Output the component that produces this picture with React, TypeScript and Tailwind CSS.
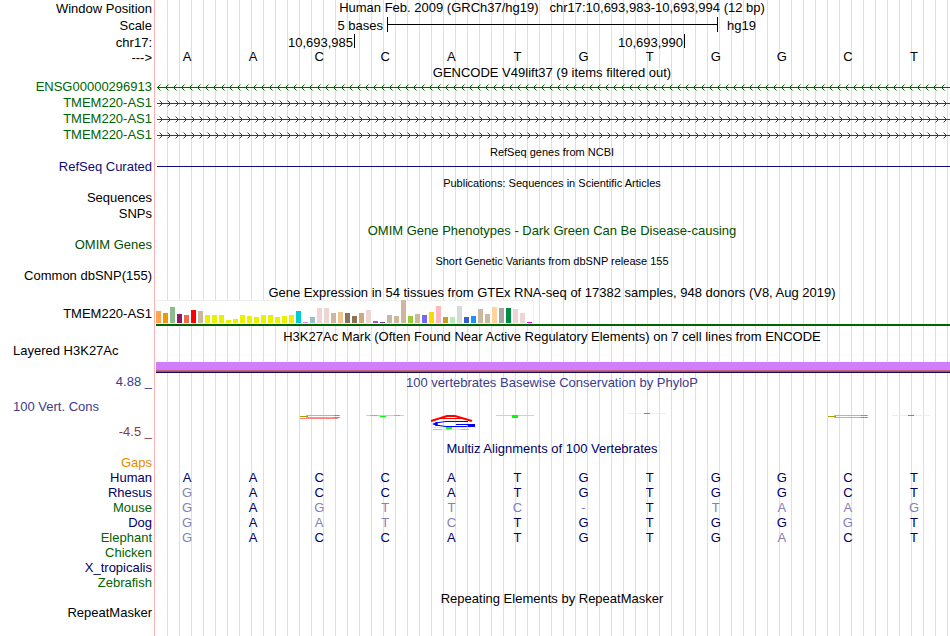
import React from 'react';

const EXPRESSION: [number, string][] = [
  [12, '#ffa54f'], [10, '#ee9a00'], [16, '#8fbc8f'], [9, '#8b1c62'], [8, '#ee6a50'], [13, '#ff0000'],
  [12, '#cdb79e'], [8, '#eeee00'], [8, '#eeee00'], [8, '#eeee00'], [3, '#eeee00'], [4, '#eeee00'],
  [8, '#eeee00'], [7, '#eeee00'], [6, '#eeee00'], [8, '#eeee00'], [8, '#eeee00'], [6, '#eeee00'],
  [7, '#eeee00'], [8, '#eeee00'], [12, '#00cdcd'], [1, '#ee82ee'], [6, '#9ac0cd'], [15, '#eed5d2'],
  [15, '#eed5d2'], [10, '#cdb79e'], [11, '#eec591'], [10, '#8b7355'], [7, '#8b7355'], [10, '#cdaa7d'],
  [13, '#eed5d2'], [2, '#b452cd'], [1, '#7a378b'], [8, '#cdb79e'], [7, '#cdb79e'], [23, '#cdb79e'],
  [7, '#9acd32'], [9, '#cdb79e'], [8, '#7a67ee'], [11, '#ffd700'], [17, '#ffb6c1'], [6, '#cd9b1d'],
  [6, '#b4eeb4'], [17, '#d9d9d9'], [6, '#3a5fcd'], [7, '#1e90ff'], [14, '#cdb79e'], [9, '#cdb79e'],
  [16, '#ffd39b'], [15, '#a6a6a6'], [15, '#008b45'], [14, '#eed5d2'], [10, '#eed5d2'], [1, '#ff00ff'],
];

const HUMAN = 'AACCATGTGGCT';

const SPECIES = [
  { name: 'Gaps', color: 'text-[#e68a00]', bases: '' },
  { name: 'Human', color: 'text-[#000064]', bases: HUMAN },
  { name: 'Rhesus', color: 'text-[#000064]', bases: 'GACCATGTGGCT' },
  { name: 'Mouse', color: 'text-[#006400]', bases: 'GAGTTC-TTAAG' },
  { name: 'Dog', color: 'text-[#000064]', bases: 'GAATCTGTGGGT' },
  { name: 'Elephant', color: 'text-[#006400]', bases: 'GACCATGTGACT' },
  { name: 'Chicken', color: 'text-[#006400]', bases: '' },
  { name: 'X_tropicalis', color: 'text-[#000064]', bases: '' },
  { name: 'Zebrafish', color: 'text-[#006400]', bases: '' },
];

const GENES = ['ENSG00000296913', 'TMEM220-AS1', 'TMEM220-AS1', 'TMEM220-AS1'];

interface RowProps {
  label?: React.ReactNode;
  color?: string;
  height?: string;
  children?: React.ReactNode;
}

const Row: React.FC<RowProps> = ({ label, color = 'text-black', height = 'h-4 leading-[18px]', children }) => (
  <div className={`flex ${height}`}>
    <div className={`w-[155px] shrink-0 border-r border-[#ffb0b0] pr-[2px] text-right ${color}`}>{label}</div>
    <div className="min-w-0 flex-1 pl-px">{children}</div>
  </div>
);

interface TitleProps {
  label?: React.ReactNode;
  color?: string;
  height?: string;
  small?: boolean;
  children: React.ReactNode;
}

const Title: React.FC<TitleProps> = ({ label, color = 'text-black', height = 'h-[15px] leading-[20px]', small, children }) => (
  <Row label={label} color={color} height={small ? 'h-[15px] leading-[18px]' : height}>
    <h2 className={`pr-[2px] text-center ${color} ${small ? 'text-[11px]' : ''}`}>{children}</h2>
  </Row>
);

const Bases: React.FC<{ bases: string; plain?: boolean }> = ({ bases, plain }) => (
  <div className="-ml-[2px] grid grid-cols-12 pr-[3px] text-center">
    {bases.split('').map((base, i) => (
      <span key={i} className={plain ? 'text-black' : base === HUMAN[i] ? 'text-[#000064]' : 'text-[#8282b4]'}>
        {base}
      </span>
    ))}
  </div>
);

const GeneLine: React.FC<{ id: string; reverse?: boolean }> = ({ id, reverse }) => (
  <svg className="block h-4 w-full" shapeRendering="crispEdges" fill="#006400">
    <defs>
      <pattern id={id} width="8" height="16" x="0" patternUnits="userSpaceOnUse">
        {reverse ? (
          <>
            <path d="M2 7h1v1h-1zM3 6h1v1h-1zM2 9h1v1h-1zM3 10h1v1h-1z" />
            <path d="M4 5h1v1h-1zM4 11h1v1h-1z" opacity="0.5" />
          </>
        ) : (
          <>
            <path d="M5 7h1v1h-1zM4 6h1v1h-1zM5 9h1v1h-1zM4 10h1v1h-1z" />
            <path d="M3 5h1v1h-1zM3 11h1v1h-1z" opacity="0.5" />
          </>
        )}
      </pattern>
    </defs>
    <rect x="1" width="100%" height="16" fill={`url(#${id})`} />
    <rect x="1" y="8" width="100%" height="1" />
  </svg>
);

const ExpressionChart: React.FC = () => (
  <div className="flex h-[28px] flex-col border-b-2 border-[#006400] pt-[2px]">
    <div className="flex h-6 w-[378px] shrink-0 items-end gap-[2px] border-t border-r border-b border-[#eeeeee] bg-white">
      {EXPRESSION.map(([height, color], i) => (
        <div key={i} className="w-[5px] shrink-0" style={{ height, backgroundColor: color }} />
      ))}
    </div>
  </div>
);

const Conservation: React.FC = () => (
  <svg className="block h-[51px] w-full" viewBox="0 0 794 51" preserveAspectRatio="none" fill="none">
    <path d="M150 27.5h34M150 29.5h34" stroke="#c4be50" />
    <path d="M144 28.5h8M178 27.5h5M178 29.5h5" stroke="#a8a000" />
    <path d="M144 30.5h38" stroke="#ff8080" />
    <path d="M210 27.5h38" stroke="#d4d49c" />
    <path d="M214 27.5h8M238 27.5h6" stroke="#b4b464" />
    <path d="M224 28.5h6" stroke="#00ff00" />
    <path d="M275 33L291 28H299L316 33" stroke="#ff0000" strokeWidth="2" />
    <path d="M285 30.5h20" stroke="#ff0000" />
    <path d="M312 33.5H290L279 35M279 37L290 38.5H310L316 37M300 36.5h14" stroke="#0000ff" />
    <path d="M276 36L281 34H284L281 36L284 38H281z" fill="#0000ff" />
    <path d="M312 36h7v3h-7z" fill="#0000ff" />
    <path d="M276 39.5h38" stroke="#c8f8c8" />
    <path d="M277 41.5h9M305 41.5h8" stroke="#c8c878" />
    <path d="M286 41.5h19" stroke="#e4e4b4" />
    <path d="M290 39h6v2h-6z" fill="#00ff00" />
    <path d="M340 27.5h38" stroke="#a0f0a0" />
    <path d="M356 27h6v3h-6z" fill="#00ff00" />
    <path d="M472 25.5h38" stroke="#e0f8e0" />
    <path d="M488 25.5h6" stroke="#00e000" />
    <path d="M678 27.5h34M678 29.5h34" stroke="#c4be50" />
    <path d="M672 28.5h8M705 27.5h6M705 29.5h6" stroke="#a8a000" />
    <path d="M736 27.5h38" stroke="#e0f8e0" />
    <path d="M752 27.5h6" stroke="#00e000" />
  </svg>
);

export default function App() {
  return (
    <main className="flex min-h-screen flex-col overflow-hidden bg-white bg-[repeating-linear-gradient(to_right,transparent_0_11px,#dcdcf5_11px_12px)] bg-[position:156px_0] bg-no-repeat font-['Liberation_Sans',Arial,sans-serif] text-[13px]">
      <Row label="Window Position" height="h-[17px] leading-[17px]">
        <h1 className="pr-[2px] text-center leading-[15px] whitespace-pre">{'Human Feb. 2009 (GRCh37/hg19)   chr17:10,693,983-10,693,994 (12 bp)'}</h1>
      </Row>
      <Row label="Scale" height="h-[17px] leading-[17px]">
        <div className="ml-px grid h-full grid-cols-12 pr-px">
          <div className="col-span-3 -mr-[32px] pr-1 text-right">5 bases</div>
          <div className="col-span-5 ml-[32px] -mr-[33px] flex h-[15px] items-center border-x border-black">
            <div className="h-px w-full bg-black" />
          </div>
          <div className="col-span-4 ml-[34px] pl-2">hg19</div>
        </div>
      </Row>
      <Row label="chr17:" height="h-4 leading-[17px]">
        <div className="ml-px grid grid-cols-12 pr-px">
          <div className="col-span-3 h-[14px] border-r border-black pr-px text-right">10,693,985</div>
          <div className="col-span-5 h-[14px] border-r border-black pr-px text-right">10,693,990</div>
        </div>
      </Row>
      <Row label="--->" height="h-[13px] leading-4">
        <div className="leading-[13px]">
          <Bases bases={HUMAN} plain />
        </div>
      </Row>

      <Title height="h-4 leading-[20px]">GENCODE V49lift37 (9 items filtered out)</Title>
      {GENES.map((gene, i) => (
        <Row key={i} label={gene} color="text-[#006400]" height="h-4 leading-4">
          <GeneLine id={`gene${i}`} reverse={i === 0} />
        </Row>
      ))}

      <Title small>RefSeq genes from NCBI</Title>
      <Row label="RefSeq Curated" color="text-[#0c0c78]">
        <div className="flex h-full items-center pl-px">
          <div className="h-px w-full bg-[#0c0c78]" />
        </div>
      </Row>

      <Title small>Publications: Sequences in Scientific Articles</Title>
      <Row label="Sequences" />
      <Row label="SNPs" />

      <Title color="text-[#005000]">OMIM Gene Phenotypes - Dark Green Can Be Disease-causing</Title>
      <Row label="OMIM Genes" color="text-[#005000]" />

      <Title small>Short Genetic Variants from dbSNP release 155</Title>
      <Row label="Common dbSNP(155)" />

      <Title>Gene Expression in 54 tissues from GTEx RNA-seq of 17382 samples, 948 donors (V8, Aug 2019)</Title>
      <Row label="TMEM220-AS1" height="h-[28px] leading-8">
        <ExpressionChart />
      </Row>

      <Title height="h-4 leading-[22px]">H3K27Ac Mark (Often Found Near Active Regulatory Elements) on 7 cell lines from ENCODE</Title>
      <Row label={<div className="pl-[13px] text-left">Layered H3K27Ac</div>} height="h-[31px] leading-[18px]">
        <div className="flex h-full flex-col justify-end">
          <div className="h-2 bg-[#d17dff]" />
          <div className="h-px bg-[#c0607c]" />
          <div className="h-px bg-[#806080]" />
          <div className="h-px bg-[#140a50]" />
        </div>
      </Row>

      <Title label={<div className="leading-[18px]">4.88 _</div>} color="text-[#3c3c8c]">
        100 vertebrates Basewise Conservation by PhyloP
      </Title>
      <Row
        height="h-[51px] leading-4"
        color="text-[#3c3c8c]"
        label={
          <div className="flex flex-col gap-[9px] pt-[11px]">
            <div className="pl-[13px] text-left">100 Vert. Cons</div>
            <div className="text-[#8c3c3c]">-4.5 _</div>
          </div>
        }
      >
        <Conservation />
      </Row>

      <Title color="text-[#000064]">Multiz Alignments of 100 Vertebrates</Title>
      {SPECIES.map((s) => (
        <Row key={s.name} label={s.name} color={s.color} height="h-[15px] leading-[18px]">
          <Bases bases={s.bases} />
        </Row>
      ))}

      <Title>Repeating Elements by RepeatMasker</Title>
      <Row label="RepeatMasker" />
      <Row height="flex-1" />
    </main>
  );
}
